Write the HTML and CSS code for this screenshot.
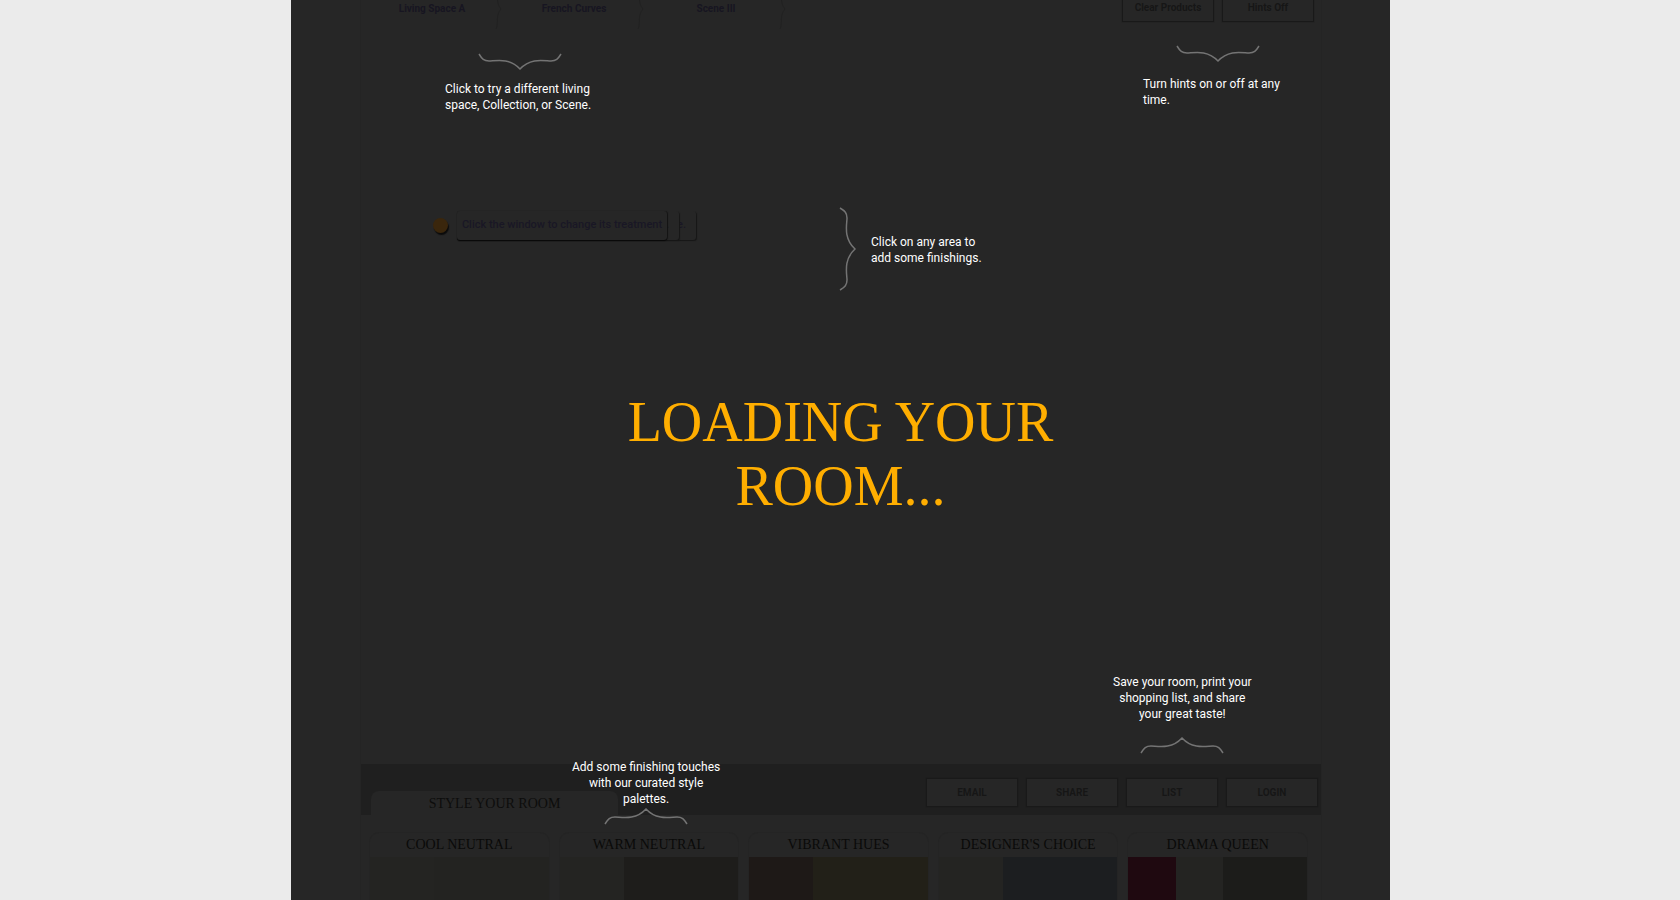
FILE: index.html
```html
<!DOCTYPE html>
<html lang="en">
<head>
<meta charset="utf-8">
<title>Style Your Room</title>
<link rel="stylesheet" href="styles.css">
</head>
<body>
<main class="page">
  <div class="frame">
    <header class="topbar">
      <nav class="steps">
        <a class="step" href="#space">Living Space A<svg class="chevron" viewBox="0 0 8 44"><path d="M1 2C4 8 0 16 6 23C0 30 4 38 1 43"/></svg></a>
        <a class="step" href="#collection">French Curves<svg class="chevron" viewBox="0 0 8 44"><path d="M1 2C4 8 0 16 6 23C0 30 4 38 1 43"/></svg></a>
        <a class="step" href="#scene">Scene III<svg class="chevron" viewBox="0 0 8 44"><path d="M1 2C4 8 0 16 6 23C0 30 4 38 1 43"/></svg></a>
      </nav>
      <div class="actions">
        <button class="btn" type="button">Clear Products</button>
        <button class="btn" type="button">Hints Off</button>
      </div>
    </header>
    <section class="scene">
      <div class="hotspot"></div>
      <div class="tip tip-back">e.</div>
      <div class="tip tip-mid">.</div>
      <div class="tip tip-front">Click the window to change its treatment</div>
    </section>
    <section class="toolbar">
      <h2 class="tab">STYLE YOUR ROOM</h2>
      <div class="actions">
        <button class="btn" type="button">EMAIL</button>
        <button class="btn" type="button">SHARE</button>
        <button class="btn" type="button">LIST</button>
        <button class="btn" type="button">LOGIN</button>
      </div>
    </section>
    <section class="palettes">
      <article class="card"><h3>COOL NEUTRAL</h3><div class="swatches"><i class="narrow ivory"></i><i class="wide sand"></i></div></article>
      <article class="card"><h3>WARM NEUTRAL</h3><div class="swatches"><i class="narrow ivory"></i><i class="wide taupe"></i></div></article>
      <article class="card"><h3>VIBRANT HUES</h3><div class="swatches"><i class="narrow rust"></i><i class="wide gold"></i></div></article>
      <article class="card"><h3>DESIGNER'S CHOICE</h3><div class="swatches"><i class="narrow ivory"></i><i class="wide slate"></i></div></article>
      <article class="card"><h3>DRAMA QUEEN</h3><div class="swatches"><i class="third berry"></i><i class="third ivory"></i><i class="half stone"></i></div></article>
    </section>
  </div>
  <div class="overlay">
    <h1 class="loading">LOADING YOUR<br>ROOM...</h1>
    <div class="hint hint-steps">
      <svg class="brace" viewBox="0 0 84 18"><path d="M1 1C4 6 6 8 11 8C17 8 31 4 42 16C53 4 67 8 73 8C78 8 80 6 83 1"/></svg>
      <p>Click to try a different living<br>space, Collection, or Scene.</p>
    </div>
    <div class="hint hint-toggle">
      <svg class="brace" viewBox="0 0 84 18"><path d="M1 1C4 6 6 8 11 8C17 8 31 4 42 16C53 4 67 8 73 8C78 8 80 6 83 1"/></svg>
      <p>Turn hints on or off at any<br>time.</p>
    </div>
    <div class="hint hint-area">
      <svg class="brace-side" viewBox="0 0 18 84"><path d="M1 1C6 4 8 6 8 11C8 17 4 31 16 42C4 53 8 67 8 73C8 78 6 80 1 83"/></svg>
      <p>Click on any area to<br>add some finishings.</p>
    </div>
    <div class="hint hint-save">
      <p>Save your room, print your<br>shopping list, and share<br>your great taste!</p>
      <svg class="brace" viewBox="0 0 84 18"><path d="M1 17C4 12 6 10 11 10C17 10 31 14 42 2C53 14 67 10 73 10C78 10 80 12 83 17"/></svg>
    </div>
    <div class="hint hint-palette">
      <p>Add some finishing touches<br>with our curated style<br>palettes.</p>
      <svg class="brace" viewBox="0 0 84 18"><path d="M1 17C4 12 6 10 11 10C17 10 31 14 42 2C53 14 67 10 73 10C78 10 80 12 83 17"/></svg>
    </div>
  </div>
</main>
</body>
</html>
```
FILE: styles.css
```css
* { box-sizing: border-box; }
body { margin: 0; background: #ebebeb; font-family: Roboto, "Liberation Sans", sans-serif; overflow: hidden; }
h1, h2, h3, p { margin: 0; font-weight: 400; }

.page { position: relative; max-width: 1100px; height: 100vh; margin: 0 auto; padding: 0 68px 0 69px; border-left: 1px solid #ebebeb; background: #262626; overflow: hidden; }
.frame { display: flex; flex-direction: column; height: 100%; border: solid #242424; border-width: 0 1px; }

.topbar { display: flex; justify-content: space-between; height: 46px; margin-top: -14px; padding-right: 7px; }
.steps { display: flex; }
.step { position: relative; width: 142px; line-height: 46px; text-align: center; font-size: 10px; font-weight: 700; color: #171521; text-decoration: none; }
.chevron { position: absolute; top: 0; right: 0; width: 8px; height: 44px; fill: none; stroke: #212121; }
.actions { display: flex; gap: 8px; }
.btn { width: 92px; height: 29px; padding: 0; border: 1px solid #191919; background: #262626; color: #161616; font: 700 10px Roboto, sans-serif; box-shadow: 0 0 1px #1c1c1c; }
.topbar .btn { margin-top: 7px; }

.scene { position: relative; flex: 1; }
.hotspot { position: absolute; left: 72px; top: 186px; width: 15px; height: 15px; border-radius: 50%; background: #3a260c; box-shadow: 1px 2px 1px #0b0b0b; }
.tip { position: absolute; left: 96px; top: 179px; height: 29px; padding: 0 10px; border-radius: 3px; background: #262626; box-shadow: 1px 1px 1px #171717; font-size: 11px; line-height: 28px; font-weight: 500; color: #191725; text-align: right; white-space: nowrap; }
.tip-back { width: 239px; }
.tip-mid { width: 222px; }
.tip-front { width: 210px; text-align: center; padding: 0; box-shadow: 0 1px 1px #080808, 1px 0 1px #171717; }

.toolbar { display: flex; justify-content: space-between; align-items: flex-end; height: 51px; padding: 0 3px 0 10px; background: #1f1f1f; }
.toolbar .actions { align-self: center; padding-top: 6px; }
.tab { width: 247px; height: 24px; border-radius: 8px 8px 0 0; background: #262626; color: #0d0d0c; font: 14px/26px "Liberation Serif", serif; text-align: center; }

.palettes { display: grid; grid-template-columns: repeat(5, 1fr); gap: 9px; height: 85px; padding: 17px 13px 0 8px; }
.card { display: flex; flex-direction: column; border: 1px solid #242424; border-bottom: 0; border-radius: 10px 10px 0 0; }
.card h3 { height: 24px; color: #0a0a09; font: 14px/24px "Liberation Serif", serif; text-align: center; }
.swatches { display: flex; flex: 1; }
.narrow { flex: 36; }
.wide { flex: 64; }
.third { flex: 26; }
.half { flex: 46; }
.ivory { background: #242422; }
.sand { background: #232321; }
.taupe { background: #1e1d1b; }
.rust { background: #1e1917; }
.gold { background: #222018; }
.slate { background: #1c1e20; }
.berry { background: #1f0910; }
.stone { background: #1c1c1a; }

.overlay { position: absolute; inset: 0; display: grid; place-content: start center; padding-top: 390px; }
.loading { color: #ffae00; font: 56px/64px "Liberation Serif", serif; text-align: center; }
.hint { position: absolute; display: flex; flex-direction: column; color: #fff; font-size: 12px; line-height: 16px; white-space: nowrap; }
.brace, .brace-side { fill: none; stroke: #747474; stroke-width: 1.5; }
.brace { width: 84px; height: 18px; }
.brace-side { width: 18px; height: 84px; }
.hint-steps { left: 154px; top: 53px; gap: 10px; }
.hint-steps .brace, .hint-toggle .brace { margin-left: 33px; }
.hint-toggle { left: 852px; top: 45px; gap: 13px; }
.hint-area { left: 548px; top: 207px; flex-direction: row; align-items: center; gap: 14px; }
.hint-area p { padding-top: 2px; }
.hint-save, .hint-palette { align-items: center; text-align: center; }
.hint-save { left: 822px; bottom: 146px; gap: 14px; }
.hint-palette { left: 281px; bottom: 75px; }
```
